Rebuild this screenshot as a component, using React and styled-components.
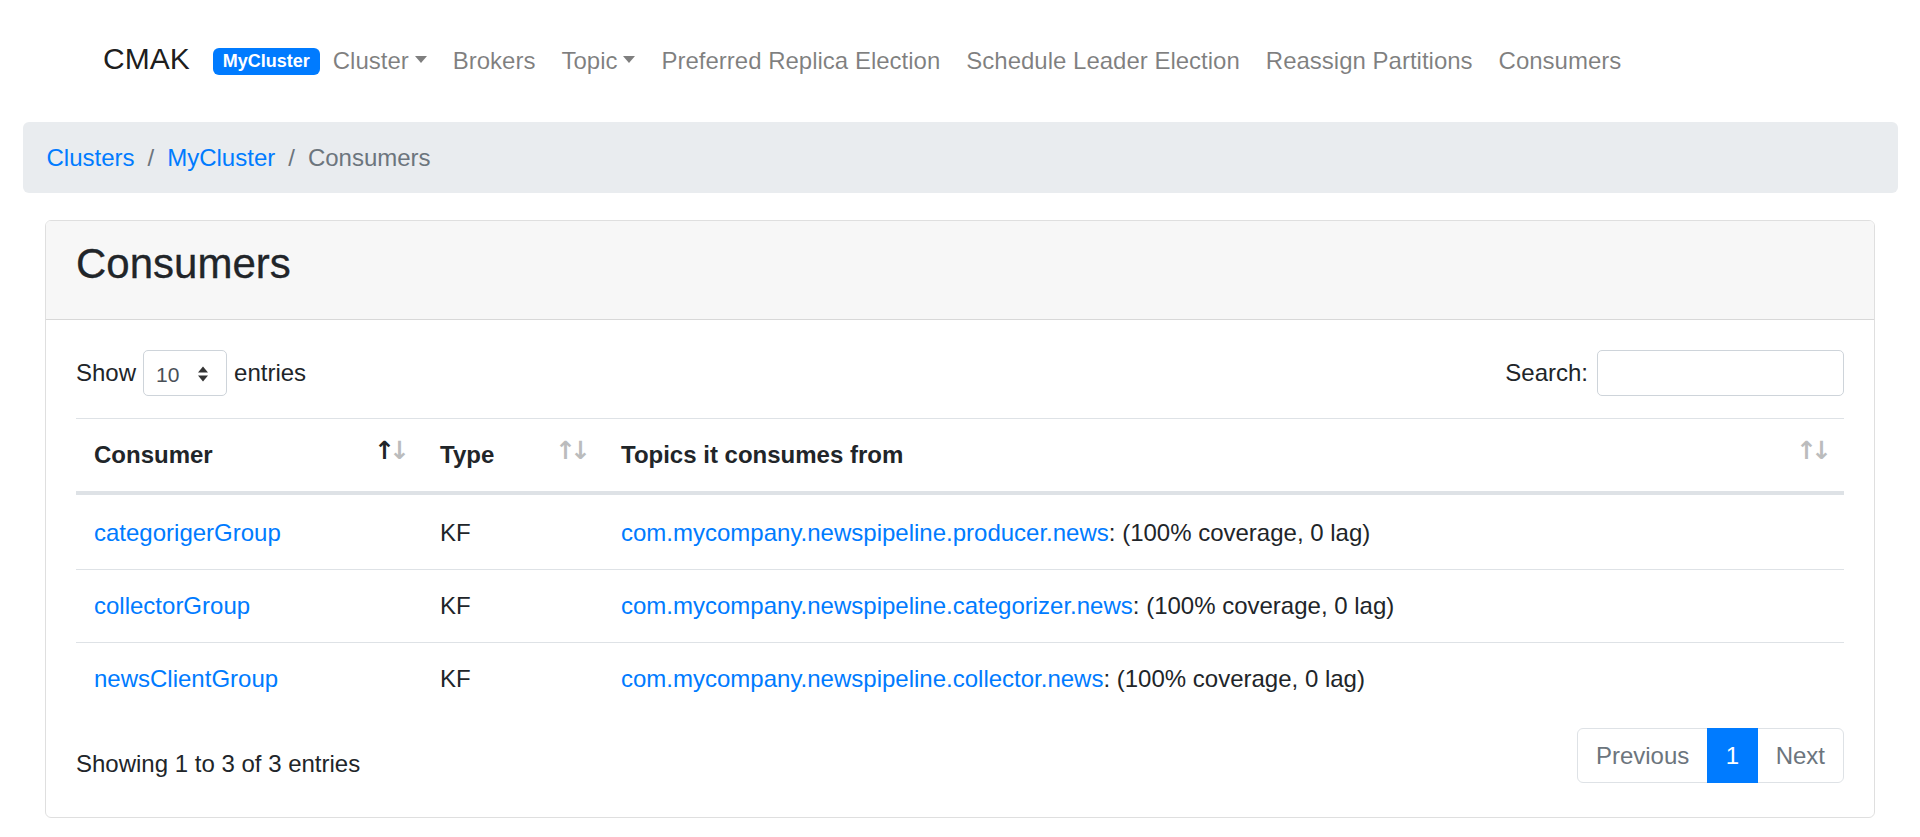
import React from "react";
import styled, { createGlobalStyle, css } from "styled-components";

const GlobalStyle = createGlobalStyle`
  html, body { margin: 0; padding: 0; background: #fff; }
  body {
    font-family: "Liberation Sans", Arial, "Helvetica Neue", sans-serif;
    font-size: 24px;
    line-height: 1.5;
    color: #212529;
  }
  * { box-sizing: border-box; }
`;

const Page = styled.div`
  width: 1920px;
`;

const Navbar = styled.nav`
  height: 122px;
  display: flex;
  align-items: center;
  padding-left: 103px;
`;

const Brand = styled.a`
  font-size: 30px;
  line-height: 1.5;
  color: rgba(0, 0, 0, 0.9);
  margin-right: 23px;
  text-decoration: none;
  margin-top: -6px;
`;

const Badge = styled.span`
  display: inline-block;
  background: #007bff;
  color: #fff;
  font-size: 18px;
  font-weight: 700;
  line-height: 1;
  padding: 4.5px 10px;
  border-radius: 6px;
`;

const NavLink = styled.a`
  display: inline-flex;
  align-items: center;
  padding: 0 13px;
  color: rgba(0, 0, 0, 0.5);
  font-size: 24px;
  line-height: 36px;
  text-decoration: none;
  ${(p) =>
    p.$dropdown &&
    css`
      &::after {
        content: "";
        display: inline-block;
        margin-left: 6px;
        margin-top: -3px;
        border-top: 7px solid rgba(0, 0, 0, 0.5);
        border-left: 6px solid transparent;
        border-right: 6px solid transparent;
      }
    `}
`;

const Container = styled.div`
  padding: 0 22.5px;
`;

const Breadcrumb = styled.ol`
  display: flex;
  list-style: none;
  margin: 0 0 27px;
  padding: 18px 24px 17px;
  background: #e9ecef;
  border-radius: 6px;
  line-height: 36px;
`;

const Crumb = styled.li`
  color: #6c757d;
  & + &::before {
    content: "/";
    display: inline-block;
    padding: 0 13px;
    color: #6c757d;
  }
`;

const Link = styled.a`
  color: #007bff;
  text-decoration: none;
`;

const Card = styled.section`
  margin: 0 22.5px;
  border: 1.5px solid rgba(0, 0, 0, 0.125);
  border-radius: 6px;
  overflow: hidden;
`;

const CardHeader = styled.header`
  background: #f7f7f7;
  border-bottom: 1.5px solid rgba(0, 0, 0, 0.125);
  padding: 18px 30px;
`;

const Title = styled.h3`
  margin: 0 0 12px;
  font-size: 42px;
  font-weight: 500;
  line-height: 1.2;
  color: #212529;
  -webkit-text-stroke: 0.3px #212529;
`;

const CardBody = styled.div`
  padding: 30px 30px 34px;
`;

const ControlsRow = styled.div`
  display: flex;
  justify-content: space-between;
  align-items: center;
  height: 46px;
`;

const Label = styled.label`
  display: flex;
  align-items: center;
  gap: 7px;
  white-space: nowrap;
`;

const SelectBox = styled.div`
  width: 84px;
  height: 46px;
  border: 1.5px solid #ced4da;
  border-radius: 5px;
  display: flex;
  align-items: center;
  justify-content: space-between;
  padding: 2px 17px 0 12px;
  font-size: 21px;
  color: #495057;
  background: #fff;
`;

const SearchInput = styled.input`
  width: 247px;
  height: 46px;
  border: 1.5px solid #ced4da;
  border-radius: 5px;
  margin-left: 2px;
  font-size: 21px;
  padding: 0 12px;
  font-family: inherit;
  background: #fff;
`;

const Table = styled.table`
  width: 100%;
  margin-top: 22px;
  border-collapse: collapse;
  table-layout: fixed;
`;

const Th = styled.th`
  position: relative;
  text-align: left;
  font-weight: 700;
  padding: 18px 45px 18px 18px;
  line-height: 36px;
  vertical-align: bottom;
  border-top: 1.5px solid #dee2e6;
  border-bottom: 4px solid #dee2e6;
  width: ${(p) => p.$w || "auto"};
  &::before,
  &::after {
    position: absolute;
    bottom: 22px;
    font-family: "DejaVu Sans", sans-serif;
    font-size: 25px;
    line-height: 36px;
    font-weight: 700;
    color: #212529;
    opacity: 0.3;
  }
  &::before {
    content: "\\2191";
    right: 27px;
    opacity: ${(p) => (p.$asc ? 1 : 0.3)};
  }
  &::after {
    content: "\\2193";
    right: 12px;
  }
`;

const Td = styled.td`
  padding: 18px;
  line-height: 36px;
  border-top: 1.5px solid #dee2e6;
  vertical-align: top;
  white-space: nowrap;
`;

const Tr = styled.tr`
  &:first-child ${Td} {
    padding-top: 20px;
  }
`;

const FooterRow = styled.div`
  display: flex;
  justify-content: space-between;
  align-items: flex-start;
  margin-top: 13px;
`;

const Info = styled.div`
  padding-top: 18px;
  line-height: 36px;
`;

const Pagination = styled.ul`
  display: flex;
  list-style: none;
  margin: 0;
  padding: 0;
`;

const PageItem = styled.li`
  padding: 9px 18px;
  line-height: 36px;
  height: 55px;
  border: 1.5px solid #dee2e6;
  color: #6c757d;
  background: #fff;
  & + & {
    margin-left: -1.5px;
  }
  &:first-child {
    border-radius: 6px 0 0 6px;
  }
  &:last-child {
    border-radius: 0 6px 6px 0;
  }
  ${(p) =>
    p.$active &&
    css`
      background: #007bff;
      border-color: #007bff;
      color: #fff;
      position: relative;
    `}
`;

const SelectArrows = () => (
  <svg width="12" height="18" viewBox="0 0 12 18">
    <path d="M6 1.5 L11 7.5 H1 Z" fill="#333" />
    <path d="M6 16.5 L11 10.5 H1 Z" fill="#333" />
  </svg>
);

const navItems = [
  { label: "Cluster", dropdown: true },
  { label: "Brokers" },
  { label: "Topic", dropdown: true },
  { label: "Preferred Replica Election" },
  { label: "Schedule Leader Election" },
  { label: "Reassign Partitions" },
  { label: "Consumers" },
];

const rows = [
  { name: "categorigerGroup", topic: "com.mycompany.newspipeline.producer.news" },
  { name: "collectorGroup", topic: "com.mycompany.newspipeline.categorizer.news" },
  { name: "newsClientGroup", topic: "com.mycompany.newspipeline.collector.news" },
];

export default function App() {
  return (
    <Page>
      <GlobalStyle />
      <Navbar>
        <Brand>CMAK</Brand>
        <Badge>MyCluster</Badge>
        {navItems.map((n) => (
          <NavLink key={n.label} $dropdown={n.dropdown}>
            {n.label}
          </NavLink>
        ))}
      </Navbar>
      <Container>
        <Breadcrumb>
          <Crumb>
            <Link>Clusters</Link>
          </Crumb>
          <Crumb>
            <Link>MyCluster</Link>
          </Crumb>
          <Crumb>Consumers</Crumb>
        </Breadcrumb>
        <Card>
          <CardHeader>
            <Title>Consumers</Title>
          </CardHeader>
          <CardBody>
            <ControlsRow>
              <Label>
                Show
                <SelectBox>
                  <span>10</span>
                  <SelectArrows />
                </SelectBox>
                entries
              </Label>
              <Label>
                Search:
                <SearchInput type="search" />
              </Label>
            </ControlsRow>
            <Table>
              <thead>
                <tr>
                  <Th $w="346px" $asc>
                    Consumer
                  </Th>
                  <Th $w="181px">Type</Th>
                  <Th>Topics it consumes from</Th>
                </tr>
              </thead>
              <tbody>
                {rows.map((r) => (
                  <Tr key={r.name}>
                    <Td>
                      <Link>{r.name}</Link>
                    </Td>
                    <Td>KF</Td>
                    <Td>
                      <Link>{r.topic}</Link>: (100% coverage, 0 lag)
                    </Td>
                  </Tr>
                ))}
              </tbody>
            </Table>
            <FooterRow>
              <Info>Showing 1 to 3 of 3 entries</Info>
              <Pagination>
                <PageItem>Previous</PageItem>
                <PageItem $active>1</PageItem>
                <PageItem>Next</PageItem>
              </Pagination>
            </FooterRow>
          </CardBody>
        </Card>
      </Container>
    </Page>
  );
}
